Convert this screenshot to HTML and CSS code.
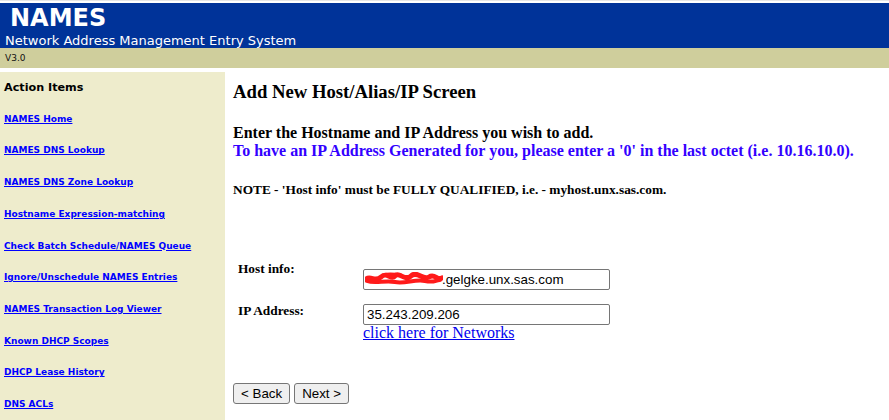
FILE: index.html
```html
<!DOCTYPE html>
<html>
<head>
<meta charset="utf-8">
<title>NAMES - Add New Host/Alias/IP Screen</title>
<link rel="stylesheet" href="styles.css">
</head>
<body>
<header class="masthead">
  <div class="brand">NAMES</div>
  <div class="subtitle">Network Address Management Entry System</div>
</header>
<div class="version">V3.0</div>
<div class="layout">
  <nav class="sidebar">
    <div class="side-title">Action Items</div>
    <a href="#">NAMES Home</a>
    <a href="#">NAMES DNS Lookup</a>
    <a href="#">NAMES DNS Zone Lookup</a>
    <a href="#">Hostname Expression-matching</a>
    <a href="#">Check Batch Schedule/NAMES Queue</a>
    <a href="#">Ignore/Unschedule NAMES Entries</a>
    <a href="#">NAMES Transaction Log Viewer</a>
    <a href="#">Known DHCP Scopes</a>
    <a href="#">DHCP Lease History</a>
    <a href="#">DNS ACLs</a>
  </nav>
  <main class="content">
    <h3 class="title">Add New Host/Alias/IP Screen</h3>
    <p class="intro">Enter the Hostname and IP Address you wish to add.<br><span class="hint">To have an IP Address Generated for you, please enter a '0' in the last octet (i.e. 10.16.10.0).</span></p>
    <p class="note">NOTE - 'Host info' must be FULLY QUALIFIED, i.e. - myhost.unx.sas.com.</p>
    <form class="form">
      <label class="label">Host info:</label>
      <div class="field field-host">
        <svg class="scribble" width="78" height="14" viewBox="0 0 78 14" aria-hidden="true">
          <path d="M1 7 C6 3, 10 11, 16 5 S 26 9, 30 4 S 40 10, 46 4 S 58 9, 64 5 S 72 9, 77 6" fill="none" stroke="#ff1a1a" stroke-width="5" stroke-linecap="round"/>
          <path d="M2 9 C10 12, 20 8, 30 10 S 50 7, 60 9 S 70 8, 75 8" fill="none" stroke="#ff1a1a" stroke-width="4" stroke-linecap="round"/>
          <path d="M18 3 C 24 1, 30 2, 36 3" fill="none" stroke="#ff1a1a" stroke-width="3" stroke-linecap="round"/>
        </svg><span>.gelgke.unx.sas.com</span>
      </div>
      <label class="label label-ip">IP Address:</label>
      <div class="ip-cell">
        <div class="field field-ip"><span>35.243.209.206</span></div>
        <a class="net-link" href="#">click here for Networks</a>
      </div>
    </form>
    <div class="buttons">
      <button type="button" class="btn">&lt; Back</button>
      <button type="button" class="btn">Next &gt;</button>
    </div>
  </main>
</div>
</body>
</html>
```
FILE: styles.css
```css
html, body {
  margin: 0;
  padding: 0;
  background: #ffffff;
}
body {
  padding-top: 2px;
  border-top: 1px solid #e6e6e6;
  box-sizing: border-box;
  font-family: "Liberation Serif", "Times New Roman", serif;
  color: #000;
}
.masthead {
  background: #003399;
  height: 45px;
  color: #fff;
  font-family: "DejaVu Sans", Verdana, sans-serif;
}
.brand {
  font-weight: bold;
  font-size: 24px;
  line-height: 28px;
  padding-left: 10px;
  padding-top: 1px;
}
.subtitle {
  font-size: 13px;
  line-height: 15px;
  padding-left: 5px;
  padding-top: 1px;
}
.version {
  background: #cfce9c;
  height: 20px;
  font-family: "DejaVu Sans", Verdana, sans-serif;
  font-size: 9px;
  line-height: 20px;
  padding-left: 5px;
  color: #111;
}
.layout {
  display: flex;
  margin-top: 4px;
  min-height: 349px;
}
.sidebar {
  width: 225px;
  flex: none;
  background: #eeeccc;
  padding-left: 4px;
  box-sizing: border-box;
  display: flex;
  flex-direction: column;
  font-family: "DejaVu Sans", Verdana, sans-serif;
  font-weight: bold;
}
.side-title {
  font-size: 11.2px;
  line-height: 31.7px;
  color: #000;
}
.sidebar a {
  font-size: 9px;
  line-height: 31.7px;
  color: #0000ff;
  text-decoration: underline;
}
.content {
  flex: 1;
  padding-left: 8px;
}
.title {
  font-size: 18.7px;
  line-height: 22px;
  margin: 9px 0 0;
  font-weight: bold;
}
.intro {
  font-size: 16px;
  font-weight: bold;
  line-height: 18px;
  margin: 20.6px 0 0;
}
.hint {
  color: #3300ff;
}
.note {
  font-size: 13.33px;
  font-weight: bold;
  line-height: 16px;
  margin: 22px 0 0;
}
.form {
  display: grid;
  grid-template-columns: 130px 247px;
  row-gap: 13px;
  margin-top: 63px;
  align-items: start;
}
.label {
  font-size: 13.33px;
  font-weight: bold;
  line-height: 16px;
  padding-left: 5px;
}
.field {
  box-sizing: border-box;
  width: 247px;
  height: 21px;
  border: 1px solid #767676;
  border-radius: 2px;
  padding: 0 3px;
  display: flex;
  align-items: center;
  font-family: "Liberation Sans", Arial, sans-serif;
  font-size: 13.33px;
  color: #000;
  background: #fff;
}
.field-host {
  margin-top: 8.4px;
}
.scribble {
  flex: none;
  margin-left: -2px;
  margin-right: -1px;
  display: block;
}
.field-ip {
  margin-top: 1.4px;
}
.ip-cell {
  display: flex;
  flex-direction: column;
  align-items: flex-start;
}
.net-link {
  font-size: 16px;
  line-height: 16px;
  color: #0000ee;
  text-decoration: underline;
}
.buttons {
  display: flex;
  gap: 4px;
  margin-top: 42px;
}
.btn {
  font-family: "Liberation Sans", Arial, sans-serif;
  font-size: 13.33px;
  height: 21px;
  padding: 0 7px;
  border: 1px solid #767676;
  border-radius: 3px;
  background: #efefef;
  color: #000;
}
```
